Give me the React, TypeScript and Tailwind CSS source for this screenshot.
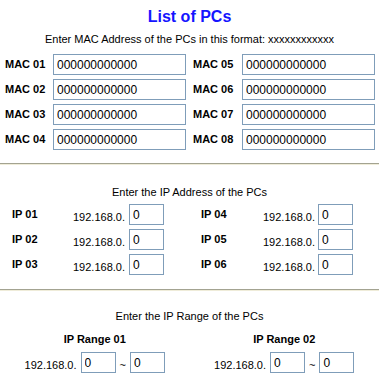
import React from "react";

const macLeft = ["01", "02", "03", "04"];
const macRight = ["05", "06", "07", "08"];
const ipLeft = ["01", "02", "03"];
const ipRight = ["04", "05", "06"];

function Box({ value, wide }: { value: string; wide?: boolean }) {
  return (
    <input
      readOnly
      value={value}
      className={`${wide ? "w-[133px]" : "w-[35px]"} h-[21px] border border-[#7f9db9] bg-white pl-[3px] text-[12px] text-black outline-none font-['Liberation_Sans',Arial,sans-serif]`}
    />
  );
}

function Rule() {
  return (
    <div className="w-[379px]">
      <div className="h-px bg-[#a3a391]" />
      <div className="h-px bg-[#efecd9]" />
    </div>
  );
}

export default function App() {
  return (
    <div className="w-[379px] h-[383px] overflow-hidden bg-white text-black font-['Liberation_Sans',Arial,sans-serif]">
      <h1 className="pt-[7px] text-center text-[16px] leading-[20px] font-bold text-[#1515ff]">List of PCs</h1>
      <p className="mt-[5px] text-center text-[11px] leading-[14px]">
        Enter MAC Address of the PCs in this format: xxxxxxxxxxxx
      </p>

      <div className="mt-[8px] pl-[5px] grid grid-cols-[48px_140px_49px_133px] gap-y-[4px]">
        {macLeft.map((n, i) => (
          <React.Fragment key={n}>
            <div className="flex items-center text-[11px] font-bold">MAC {n}</div>
            <Box value="000000000000" wide />
            <div className="flex items-center text-[11px] font-bold">MAC {macRight[i]}</div>
            <Box value="000000000000" wide />
          </React.Fragment>
        ))}
      </div>

      <div className="mt-[13px]">
        <Rule />
      </div>

      <p className="mt-[20px] text-center text-[11px] leading-[14px]">Enter the IP Address of the PCs</p>

      <div className="mt-[5px] pl-[12px] grid grid-cols-[61px_56px_72px_62px_55px_35px] gap-y-[4px]">
        {ipLeft.map((n, i) => (
          <React.Fragment key={n}>
            <div className="flex items-center text-[11px] font-bold">IP {n}</div>
            <div className="flex items-end pb-[1px] text-[11px] leading-[14px]">192.168.0.</div>
            <Box value="0" />
            <div className="flex items-center text-[11px] font-bold">IP {ipRight[i]}</div>
            <div className="flex items-end pb-[1px] text-[11px] leading-[14px]">192.168.0.</div>
            <Box value="0" />
          </React.Fragment>
        ))}
      </div>

      <div className="mt-[14px]">
        <Rule />
      </div>

      <p className="mt-[18px] text-center text-[11px] leading-[14px]">Enter the IP Range of the PCs</p>

      <div className="mt-[9px] grid grid-cols-2">
        {["01", "02"].map((n) => (
          <div key={n} className="flex flex-col items-center">
            <div className="text-[11px] leading-[14px] font-bold">IP Range {n}</div>
            <div className="mt-[6px] flex items-end">
              <span className="pb-[1px] mr-[4px] text-[11px] leading-[14px]">192.168.0.</span>
              <Box value="0" />
              <span className="mx-[4px] pb-[1px] text-[11px] leading-[14px]">~</span>
              <Box value="0" />
            </div>
          </div>
        ))}
      </div>
    </div>
  );
}
